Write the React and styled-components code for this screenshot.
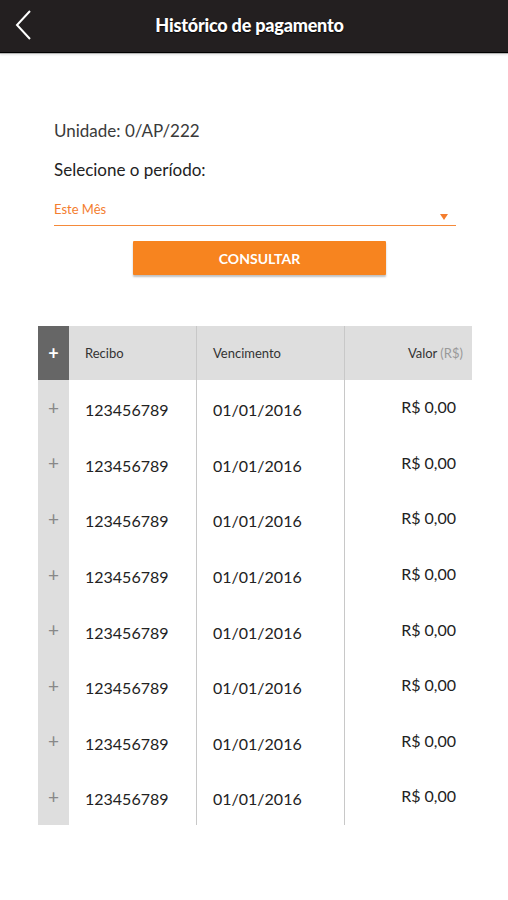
import React from 'react'
import styled, { createGlobalStyle } from 'styled-components'

const GlobalStyle = createGlobalStyle`
  html, body {
    margin: 0;
    padding: 0;
    background: #fff;
    font-family: Lato, "Open Sans", sans-serif;
  }
`

const rows = Array.from({ length: 8 }, () => ({
  recibo: '123456789',
  vencimento: '01/01/2016',
  valor: 'R$ 0,00',
}))

const App = () => (
  <>
    <GlobalStyle />
    <Page>
      <TopBar>
        <BackButton>
          <svg width="18" height="32" viewBox="0 0 18 32">
            <path d="M16 2 L3 16 L16 30" fill="none" stroke="#fff" strokeWidth="2" />
          </svg>
        </BackButton>
        <Title>Histórico de pagamento</Title>
      </TopBar>

      <Form>
        <Label>Unidade: 0/AP/222</Label>
        <Label dark>Selecione o período:</Label>
        <Select>
          <span>Este Mês</span>
          <Caret />
        </Select>
        <ButtonRow>
          <Button>CONSULTAR</Button>
        </ButtonRow>
      </Form>

      <Table>
        <HeadRow>
          <PlusCell head>+</PlusCell>
          <Cell head>Recibo</Cell>
          <Cell head divider>Vencimento</Cell>
          <Cell head divider right>Valor <Muted>(R$)</Muted></Cell>
        </HeadRow>
        {rows.map((r, i) => (
          <Row key={i}>
            <PlusCell>+</PlusCell>
            <Cell>{r.recibo}</Cell>
            <Cell divider>{r.vencimento}</Cell>
            <Cell divider right>{r.valor}</Cell>
          </Row>
        ))}
      </Table>
    </Page>
  </>
)

export default App

const Page = styled.div`
  width: 508px;
  min-height: 900px;
  background: #fff;
`

const TopBar = styled.div`
  height: 52px;
  background: #231f20;
  display: flex;
  align-items: center;
  justify-content: center;
  position: relative;
  border-bottom: 1px solid #000;
  box-shadow: 0 1px 0 #b5b5b5, 0 2px 2px rgba(0,0,0,0.1);
`

const BackButton = styled.div`
  position: absolute;
  left: 14px;
  top: 9px;
`

const Title = styled.h1`
  margin: 0 0 2px -9px;
  color: #fff;
  font-size: 18px;
  font-weight: 900;
  letter-spacing: -0.2px;
  text-shadow: 0 1px 1px rgba(0,0,0,0.8);
`

const Form = styled.div`
  padding: 67px 52px 0 54px;
  display: flex;
  flex-direction: column;
`

const Label = styled.div`
  font-size: 17px;
  color: ${p => (p.dark ? '#222' : '#3a3a3a')};
  line-height: 22px;
  margin-bottom: ${p => (p.dark ? '14px' : '17px')};
`

const Select = styled.div`
  display: flex;
  align-items: flex-end;
  justify-content: space-between;
  height: 26px;
  padding-bottom: 4px;
  border-bottom: 1.5px solid #f58a3a;
  color: #f47d2e;
  font-size: 13px;
  span {
    margin-bottom: 4px;
  }
`

const Caret = styled.div`
  width: 0;
  height: 0;
  border-left: 4.5px solid transparent;
  border-right: 4.5px solid transparent;
  border-top: 6px solid #f47d2e;
  margin: 0 8px 1px 0;
`

const ButtonRow = styled.div`
  display: flex;
  justify-content: flex-start;
  margin-top: 15px;
  padding-left: 79px;
`

const Button = styled.div`
  width: 253px;
  height: 34px;
  background: #f7841f;
  color: #fff;
  font-size: 14px;
  font-weight: 700;
  display: flex;
  align-items: center;
  justify-content: center;
  box-shadow: 0 2px 2px rgba(0,0,0,0.25);
  border-radius: 1px;
`

const Table = styled.div`
  margin: 51px 36px 0 38px;
`

const gridCols = '31px 127px 148px 1fr'

const HeadRow = styled.div`
  display: grid;
  grid-template-columns: ${gridCols};
  height: 54px;
  background: #dedede;
`

const Row = styled.div`
  display: grid;
  grid-template-columns: ${gridCols};
  height: 55.6px;
`

const PlusCell = styled.div`
  background: ${p => (p.head ? '#666' : '#dedede')};
  color: ${p => (p.head ? '#fff' : '#888')};
  font-size: ${p => (p.head ? '18px' : '19px')};
  font-weight: ${p => (p.head ? 700 : 400)};
  display: flex;
  align-items: center;
  justify-content: center;
  padding-bottom: ${p => (p.head ? '0' : '1px')};
  box-sizing: border-box;
`

const Cell = styled.div`
  display: flex;
  align-items: center;
  justify-content: ${p => (p.right ? 'flex-end' : 'flex-start')};
  padding: ${p => (p.head ? '0 9px 0 16px' : p.right ? '0 16px 2px 16px' : '4px 14px 0 16px')};
  border-left: ${p => (p.divider ? '1.5px solid #c8c8c8' : 'none')};
  font-size: ${p => (p.head ? '13px' : '16px')};
  color: ${p => (p.head ? '#333' : '#222')};
  white-space: nowrap;
  box-sizing: border-box;
`

const Muted = styled.span`
  color: #999;
  margin-left: 3px;
`
